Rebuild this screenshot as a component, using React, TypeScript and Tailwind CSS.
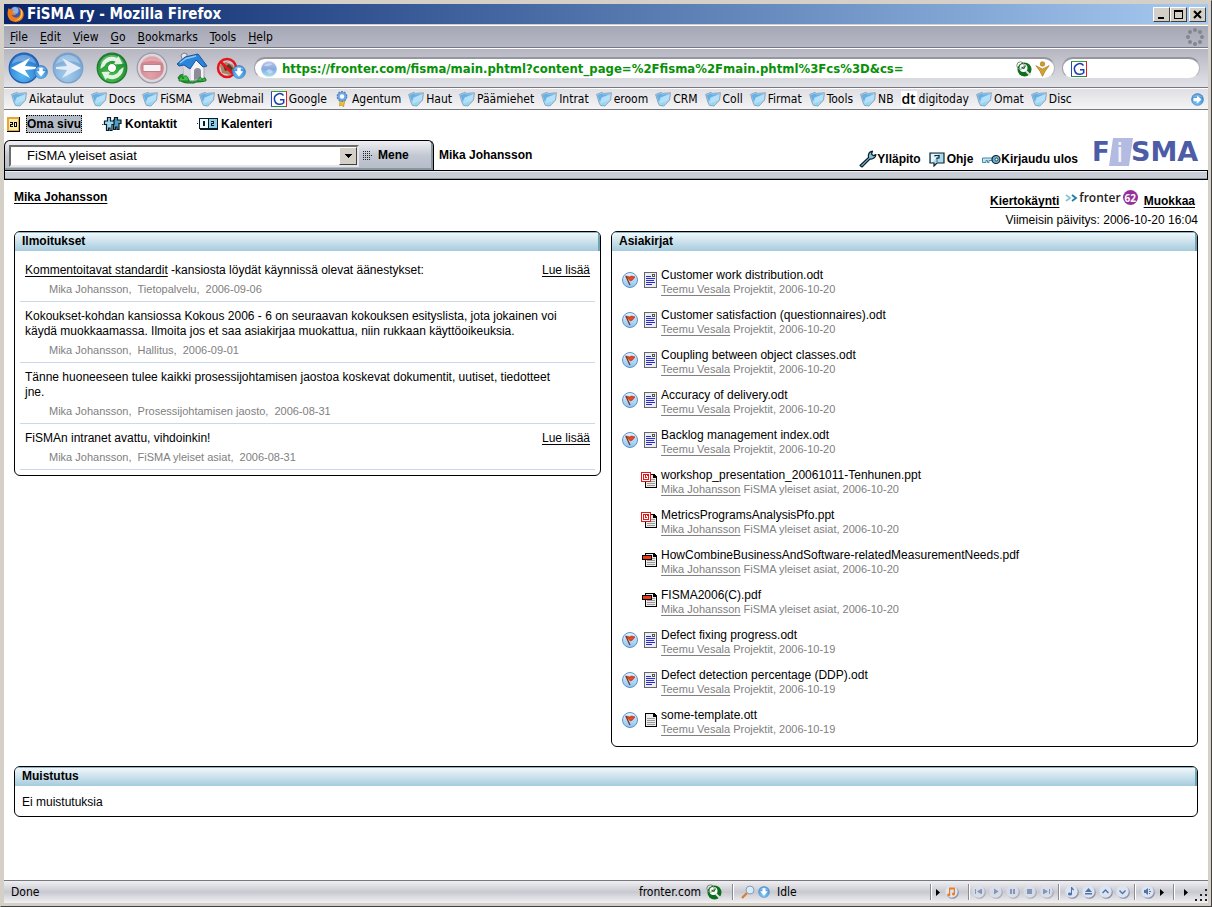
import React from "react";

const chromeFont = "font-['DejaVu_Sans_Condensed','DejaVu_Sans',sans-serif]";

/* ---------- Browser icons ---------- */

function FirefoxIcon() {
  return (
    <svg width="18" height="18" viewBox="0 0 18 18" aria-hidden="true">
      <circle cx="8.5" cy="8.5" r="7" fill="#3558b8" />
      <circle cx="8" cy="5.5" r="3.5" fill="#86b4ea" />
      <path d="M1.6 3.2 3.6 4.4C5 4 6.5 4.4 7 5.6L5.4 6.8C6 8.4 7.6 9 9.4 8.4 8.6 10.4 6 10.8 4.6 9.6 5.6 13 10.6 13.6 12.8 10.4 14.2 8 13.2 4.4 11 2c4 1.4 6.4 5.2 5.6 8.8C15.8 14.8 12.4 17 8.6 17 4 17 .6 13.4.6 9 .6 6.600 1 4.800 1.600 3.200Z" fill="#ee7a1a" />
      <path d="M13.4 3.6c2.4 2.6 2.8 6 1 9-1.6 2.4-4.4 3.4-7 2.8 3.6-.2 6-2.400 6.600-5.600.4-2.200 0-4.400-.6-6.200Z" fill="#ffd24a" />
    </svg>
  );
}

function Blob({ size, inner, outer, rim, id, children }: { size: number; inner: string; outer: string; rim: string; id: string; children: React.ReactNode }) {
  return (
    <svg width={size} height={size} viewBox="0 0 32 32" aria-hidden="true">
      <defs>
        <radialGradient id={id} cx="0.45" cy="0.75" r="0.8">
          <stop offset="0" stopColor={inner} />
          <stop offset="1" stopColor={outer} />
        </radialGradient>
      </defs>
      <circle cx="16" cy="16" r="14.8" fill={`url(#${id})`} stroke={rim} strokeWidth="1.2" />
      <path d="M4 12C6 5 11 3 16 3s10 2 12 9C22 8 10 8 4 12Z" fill="#fff" opacity="0.3" />
      {children}
    </svg>
  );
}

function DropBadge() {
  return (
    <Blob size={14} id="drop" inner="#6cc4f6" outer="#2a78cc" rim="#2d6db4">
      <path d="M12 6h8v8h6L16 26 6 14h6Z" fill="#fff" />
    </Blob>
  );
}

function HomeIcon() {
  return (
    <svg width="32" height="32" viewBox="0 0 32 32" aria-hidden="true">
      <path d="M2 26c2-5 7-4 10-2h12c3-1 5 1 6 4-4 3-9 1-12 3-6 0-12 1-16-5Z" fill="#2c9c38" stroke="#167022" />
      <path d="M7 12 20 6l8 9v11l-12 3-8-4Z" fill="#f4f4f8" stroke="#a4a4ae" />
      <path d="M7 12l8 5v12l-7-4Z" fill="#d8d9e2" />
      <path d="M18 28V19c0-4 7-4 7 0v7Z" fill="#8d8d99" />
      <path d="M5 3l3-2 3 1v7l-4 2Z" fill="#e8e8ee" stroke="#80808c" />
      <path d="M1 12 9 5l13-3 9 12-4 1-7-7-6 9-6-4-5 1Z" fill="#2d83d8" stroke="#17549c" strokeLinejoin="round" />
      <path d="M4 11 10 6.500l10-2.500" stroke="#8ccaf6" strokeWidth="1.500" fill="none" />
      <path d="M3 29c0-4 3-6 4-2 1-5 5-4 6 2ZM22 29c0-4 4-5 4-1 1-2 4-2 4 1Z" fill="#3fc24a" stroke="#167022" strokeWidth=".8" />
    </svg>
  );
}

function FlashBlockIcon() {
  return (
    <svg width="22" height="22" viewBox="0 0 22 22" aria-hidden="true">
      <path d="M4 8 10 5l7 3 2 6-5 4-8-2Z" fill="#a98364" />
      <path d="m7 8 3 1 3-2 4 4-2 4-3-2-3 1Z" fill="#5b3a26" />
      <circle cx="11" cy="11" r="9" fill="none" stroke="#e8141c" strokeWidth="2.500" />
      <path d="m5 5 12 12" stroke="#e8141c" strokeWidth="2.500" />
    </svg>
  );
}

function GlobeIcon() {
  return (
    <svg width="16" height="16" viewBox="0 0 16 16" aria-hidden="true">
      <defs>
        <linearGradient id="globe" x1="0" y1="0" x2="0" y2="1">
          <stop offset="0" stopColor="#c3c8ea" />
          <stop offset=".5" stopColor="#86aade" />
          <stop offset="1" stopColor="#a6e2f4" />
        </linearGradient>
      </defs>
      <circle cx="8" cy="8" r="7.800" fill="url(#globe)" />
      <path d="M3 5c2-2.500 5-3 8-2-1 2-5 2-8 2ZM5 10l3-2 2 1 2 2-3 2Z" fill="#dfe8f8" opacity=".6" />
    </svg>
  );
}

function GoogleIcon() {
  return (
    <svg width="16" height="16" viewBox="0 0 16 16" aria-hidden="true">
      <path fill="#fff" d="M0 0h16v16H0z" />
      <path d="M.5 16V.5" stroke="#2348c0" />
      <path d="M0 .5h16" stroke="#3aa03a" />
      <path d="M15.500 0v16" stroke="#d82424" />
      <path d="M0 15.500h15" stroke="#2a8c3c" />
      <path d="M12.500 4.500C11 2.600 8.500 2.300 6.500 3.200 4 4.300 3 7 3.600 9.300c.7 2.800 3 4.200 5.400 4 1.600-.1 2.800-.7 3.700-1.500V8.700H9" fill="none" stroke="#1b3fae" strokeWidth="1.500" />
    </svg>
  );
}

function FolderIcon() {
  return (
    <svg width="16" height="16" viewBox="0 0 16 16" aria-hidden="true">
      <path d="M.6 3.400 6 1.400l1.400 1 8-.6-.8 7.200L9 15l-4.600-.6L3 11.400Z" fill="#a5d6f4" stroke="#8496a8" strokeWidth=".8" strokeLinejoin="round" />
      <path d="M1.600 4 6 2.400 7.400 3.400l6.800-.4L5.600 6.400 3.800 10.800Z" fill="#66b0e6" />
      <path d="M6 6.800 14.400 3.400 13.600 8.800 9 11 4.600 12.600Z" fill="#b4e0f9" />
      <path d="m4.800 13 4.600-1.800-.8 3Z" fill="#7ce0f6" />
    </svg>
  );
}

function RibbonIcon() {
  return (
    <svg width="16" height="16" viewBox="0 0 16 16" aria-hidden="true">
      <path d="M6 9h5l-1.500 7-1.500-2-2.500 1Z" fill="#f0c22c" stroke="#b58612" strokeWidth=".6" />
      <circle cx="8" cy="5.500" r="4.800" fill="#6ea8e4" stroke="#5680bc" strokeDasharray="2 1" strokeWidth="1.200" />
      <circle cx="8" cy="5.500" r="2.200" fill="#fff" />
    </svg>
  );
}

function SecurityIcon() {
  return (
    <svg width="16" height="16" viewBox="0 0 16 16" aria-hidden="true">
      <circle cx="8.500" cy="8.500" r="7" fill="#0d6e1b" />
      <circle cx="7.500" cy="7" r="4" fill="#fff" />
      <path d="m9.500 4.500-2 3.500M7.500 7l-2-1" stroke="#0d6e1b" strokeWidth="1.200" />
      <path d="m10 10 4.500 4.500" stroke="#e2e2e2" strokeWidth="2" />
      <circle cx="4.500" cy="4.500" r="3.700" fill="none" stroke="#7a8a7c" />
    </svg>
  );
}

function PersonIcon() {
  return (
    <svg width="15" height="16" viewBox="0 0 15 16" aria-hidden="true">
      <circle cx="7.500" cy="3" r="2.300" fill="#d39a2c" stroke="#a3731a" strokeWidth=".6" />
      <path d="M.8 4.600 7.500 8l6.700-3.400-4 5.600-2.700 5.200-2.600-5.200Z" fill="#d8a032" stroke="#a3731a" strokeWidth=".6" />
    </svg>
  );
}

function Throbber() {
  const dots = [[9, 2], [14, 4], [16, 9], [14, 14], [9, 16], [4, 14], [2, 9], [4, 4]];
  return (
    <svg width="18" height="18" viewBox="0 0 18 18" aria-hidden="true">
      {dots.map(([x, y]) => (
        <circle key={`${x}-${y}`} cx={x} cy={y} r="2" fill="#85858c" />
      ))}
    </svg>
  );
}

function ArrowBadge() {
  return (
    <Blob size={13} id="more" inner="#7ccaf6" outer="#2a78cc" rim="#3a7cc0">
      <path d="M6 12h9V6l11 10-11 10v-6H6Z" fill="#fff" />
    </Blob>
  );
}

/* ---------- Page icons ---------- */

function HomePageIcon() {
  return (
    <svg width="13" height="15" viewBox="0 0 13 15" shapeRendering="crispEdges" aria-hidden="true">
      <path d="M0 0h13v15H0z" fill="#000" />
      <path d="M0 0h12v14H0z" fill="#e9a52c" />
      <path d="M2 2h9v11H2z" fill="#fde9b0" />
      <path d="M3 5h3v1H3zM5 6h1v1H5zM3 7h3v1H3zM3 8h1v1H3zM3 9h3v1H3zM7 5h3v1H7zM7 9h3v1H7zM7 5h1v4H7zM9 5h1v4H9z" fill="#000" />
    </svg>
  );
}

function ContactsIcon() {
  return (
    <svg width="20" height="16" viewBox="0 0 20 16" aria-hidden="true">
      <path d="M0 8h1.500v1H0z" fill="#555" />
      <path d="M12.500 1.500h3V4h3.500v3.500h-2v6h-2V11h-1.500v2.500h-2V4h1Z" fill="#4f9fc0" stroke="#0a1c28" strokeWidth="1.200" />
      <path d="M5.500 1.500h3V5H12v3.500h-2v6H8V12H6.500v2.500h-2v-6h-2V5h3Z" fill="#9ad8f0" stroke="#0a1c28" strokeWidth="1.200" />
    </svg>
  );
}

function CalendarIcon() {
  return (
    <svg width="21" height="14" viewBox="0 0 21 14" shapeRendering="crispEdges" aria-hidden="true">
      <path d="M0 6h1v1H0zM2 1h19v12H3V12H2Z" fill="#0a1c28" />
      <path d="M3 2h8v9H3z" fill="#eef9fd" />
      <path d="M12 2h8v9h-8z" fill="#8fcfe6" />
      <path d="M6 4h2v5H6zM14 4h3v1h-3zM16 5h1v1h-1zM14 6h3v1h-3zM14 7h1v1h-1zM14 8h3v1h-3z" fill="#0a1c28" />
    </svg>
  );
}

function WrenchIcon() {
  return (
    <svg width="18" height="18" viewBox="0 0 18 18" aria-hidden="true">
      <path d="M1 15.500 9.500 7.500C9 4.500 10.500 1.800 13.500 1.200L12.500 4l1.800 1.600L17 4.500C16.600 7.500 14 9.600 11 9L3 17Z" fill="#7fc3de" stroke="#10222c" strokeWidth="1.200" strokeLinejoin="round" />
    </svg>
  );
}

function HelpIcon() {
  return (
    <svg width="16" height="15" viewBox="0 0 16 15" aria-hidden="true">
      <path d="M1 1h14v10H8l-3 3v-3H1Z" fill="#a9dbee" stroke="#10222c" strokeWidth="1.200" />
      <path d="M2 2h8L4 10H2Z" fill="#e4f6fc" />
      <path d="M6 4.500V3.500h4V6H8v1.500M8 8.500v1" fill="none" stroke="#10222c" strokeWidth="1.200" />
    </svg>
  );
}

function KeyIcon() {
  return (
    <svg width="20" height="12" viewBox="0 0 20 12" aria-hidden="true">
      <path d="M1.500 5h10v2.500H8v2H6.500v-2H5v2H1.500Z" fill="#bfe6f4" stroke="#4a88a4" />
      <circle cx="15" cy="6.500" r="4" fill="#68b4d4" stroke="#10222c" strokeWidth="1.200" />
      <circle cx="15.500" cy="6.500" r="1.400" fill="#fff" stroke="#10222c" strokeWidth=".8" />
    </svg>
  );
}

function FlagIcon() {
  return (
    <svg width="16" height="16" viewBox="0 0 16 16" aria-hidden="true">
      <defs>
        <linearGradient id="flagBg" x1="0" y1="0" x2="0" y2="1">
          <stop offset="0" stopColor="#e8f4fc" />
          <stop offset="1" stopColor="#8cc4ee" />
        </linearGradient>
      </defs>
      <circle cx="8" cy="8" r="7.500" fill="url(#flagBg)" stroke="#5b93cc" />
      <path d="m3.500 4 4.500 1 1.500-1 3.500 1-2 2.500-2.500 1.500Z" fill="#e8481e" stroke="#a8331a" strokeWidth=".7" />
      <path d="m4 4.500 4 8.500" stroke="#7a2a18" strokeWidth="1.200" />
    </svg>
  );
}

function OdtIcon() {
  return (
    <svg width="13" height="16" viewBox="0 0 13 16" shapeRendering="crispEdges" aria-hidden="true">
      <path d="M0 0h13v16H0z" fill="#66676b" />
      <path d="M1 1h11v14H1z" fill="#eceded" />
      <path d="M8 2h3v3H8z" fill="#55565a" />
      <path d="M9 3h1v1H9z" fill="#fff" />
      <path d="M2 4h5v1H2zM2 6h9v1H2zM2 8h8v1H2zM2 10h9v1H2zM2 12h6v1H2z" fill="#2a2ad8" />
    </svg>
  );
}

function SheetPath() {
  return (
    <>
      <path d="M0 0h9l3 3v11H0Z" fill="#000" />
      <path d="M1 1h7v3h3v9H1Z" fill="#ececec" />
      <path d="M2 5h8v1H2zM2 7h8v1H2zM2 9h8v1H2zM2 11h8v1H2z" fill="#9a9a9a" />
    </>
  );
}

function OttIcon() {
  return (
    <svg width="12" height="14" viewBox="0 0 12 14" shapeRendering="crispEdges" aria-hidden="true">
      <SheetPath />
    </svg>
  );
}

function PptIcon() {
  return (
    <svg width="16" height="16" viewBox="0 0 16 16" shapeRendering="crispEdges" aria-hidden="true">
      <g transform="translate(4 2)"><SheetPath /></g>
      <path d="M0 0h10v10H0z" fill="#e01818" />
      <path d="M1 1h8v8H1z" fill="#fff" />
      <path d="M2 2h6v6H2z" fill="#e01818" />
      <path d="M3 3h1v4H3zM4 6h3v1H4zM6 4h1v2H6zM5 3h1v2H5z" fill="#fff" />
    </svg>
  );
}

function PdfIcon() {
  return (
    <svg width="15" height="14" viewBox="0 0 15 14" shapeRendering="crispEdges" aria-hidden="true">
      <g transform="translate(3 0)"><SheetPath /></g>
      <path d="M0 2h10v5H0z" fill="#000" />
      <path d="M1 3h8v3H1z" fill="#f03a10" />
    </svg>
  );
}

function FismaLogo() {
  return (
    <svg width="112" height="38" viewBox="0 0 112 38" role="img" aria-label="FiSMA" fontFamily="'DejaVu Sans', sans-serif" fontWeight="700">
      <path d="M21 6h20l-4 28H17Z" fill="#b3bbe0" />
      <text x="0" y="29" fontSize="26" fill="#4d5ca6">F</text>
      <text x="24" y="30" fontSize="27" fill="#f4f5fc" fontWeight="400">i</text>
      <text x="39" y="29" fontSize="27" fill="#4d5ca6">SMA</text>
    </svg>
  );
}

function FronterLogo() {
  return (
    <span className="flex items-center font-['Open_Sans',sans-serif] text-xs leading-[15px] font-semibold text-[#222]">
      <svg width="13" height="10" viewBox="0 0 13 10" aria-hidden="true" className="mr-px">
        <path d="m1 2 4 3-4 3" fill="none" stroke="#8cc4d8" strokeWidth="1.800" />
        <path d="m7 2 4 3-4 3" fill="none" stroke="#1b7fa4" strokeWidth="1.800" />
      </svg>
      fronter
      <span className="ml-0.5 flex size-[15px] items-center justify-center rounded-full bg-[#98309c] text-[10px] leading-none font-bold text-white">62</span>
    </span>
  );
}

/* ---------- Browser chrome ---------- */

function WindowButton({ label, children }: { label: string; children: React.ReactNode }) {
  return (
    <button aria-label={label} className="flex h-[15px] w-[17px] items-center justify-center border border-t-white border-r-[#404040] border-b-[#404040] border-l-white bg-[#d4d0c8]">
      <svg width="11" height="11" viewBox="0 0 11 11" shapeRendering="crispEdges" aria-hidden="true">{children}</svg>
    </button>
  );
}

function TitleBar() {
  return (
    <header className="flex h-5 shrink-0 items-center bg-gradient-to-r from-[#0a246a] to-[#a6caf0] pr-0.5 pl-[3px]">
      <FirefoxIcon />
      <h1 className="ml-0.5 flex-1 text-[15px] leading-5 font-bold text-white">FiSMA ry - Mozilla Firefox</h1>
      <WindowButton label="Minimize"><path d="M2 8h6v2H2z" /></WindowButton>
      <WindowButton label="Maximize"><path d="M1 1h9v9H1zM2 3v6h7V3z" fillRule="evenodd" /></WindowButton>
      <span className="ml-0.5 flex">
        <WindowButton label="Close"><path d="m2 2 7 7M9 2 2 9" stroke="#000" strokeWidth="2" shapeRendering="auto" /></WindowButton>
      </span>
    </header>
  );
}

const menus = ["File", "Edit", "View", "Go", "Bookmarks", "Tools", "Help"];

function MenuBar() {
  return (
    <div className="flex h-[23px] shrink-0 items-center justify-between border-t border-b border-t-white border-b-[#77777f] bg-gradient-to-b from-[#a6a7b4] to-[#b7b8c6] pr-1 pl-1.5">
      <nav className="flex gap-3 text-xs">
        {menus.map((m) => (
          <button key={m}><span className="underline underline-offset-2">{m[0]}</span>{m.slice(1)}</button>
        ))}
      </nav>
      <Throbber />
    </div>
  );
}

const pill = "flex h-[22px] items-center rounded-full border border-t-2 border-t-[#96969e] border-r-[#b4b4bc] border-b-[#dcdce0] border-l-[#a0a0a8] bg-white";

function Toolbar() {
  return (
    <div className="flex h-10 shrink-0 items-center border-t border-b border-t-white border-b-[#77777f] bg-gradient-to-b from-[#b6b6c2] to-[#e2e2e8] pr-2 pl-1">
      <button aria-label="Back" className="flex items-center">
        <Blob size={32} id="back" inner="#58b8f4" outer="#1c68c4" rim="#1f5ca8">
          <path d="M3 16 22 6C20 9 18 12 17 14l11 1v2l-11 1c1 2 3 5 5 8Z" fill="#fff" />
        </Blob>
        <span className="-ml-1.5 pt-2"><DropBadge /></span>
      </button>
      <button aria-label="Forward" className="ml-1">
        <Blob size={32} id="forward" inner="#a4cdec" outer="#6a9cd0" rim="#7c9fc8">
          <path d="M29 16 10 6c2 3 4 6 5 8L4 15v2l11 1c-1 2-3 5-5 8Z" fill="#e4edf7" />
        </Blob>
      </button>
      <button aria-label="Reload" className="ml-3">
        <Blob size={32} id="reload" inner="#4cc050" outer="#14802a" rim="#1a7a2c">
          <path d="M4.500 17A11.500 11.500 0 0 1 21 6l1.500-2 4 8-9 .5 2-3A8.500 8.500 0 0 0 8.500 14ZM27.500 15A11.500 11.500 0 0 1 11 26l-1.500 2-4-8 9-.5-2 3a8.500 8.500 0 0 0 11-4.500Z" fill="#f2fbf2" opacity=".9" />
          <circle cx="16" cy="16" r="4.500" fill="#fff" stroke="#2a9a38" />
        </Blob>
      </button>
      <button aria-label="Stop" className="ml-2">
        <Blob size={32} id="stop" inner="#dfa2aa" outer="#d0707c" rim="#9a9aa2">
          <circle cx="16" cy="16" r="13" fill="none" stroke="#d8d8de" strokeWidth="2.500" />
          <path d="M7 12.500h18v7H7z" fill="#f5f3f6" stroke="#c0808a" />
        </Blob>
      </button>
      <button aria-label="Home" className="ml-2"><HomeIcon /></button>
      <button aria-label="Flash blocking" className="ml-2 flex items-center">
        <FlashBlockIcon />
        <span className="-ml-1.5 pt-2"><DropBadge /></span>
      </button>
      <div className={`${pill} ml-2 flex-1 gap-[5px] pr-1 pl-1.5`}>
        <GlobeIcon />
        <input
          aria-label="Address"
          className="min-w-0 flex-1 text-[13px] leading-4 font-bold text-[#089008] outline-none"
          defaultValue="https://fronter.com/fisma/main.phtml?content_page=%2Ffisma%2Fmain.phtml%3Fcs%3D&cs="
        />
        <span className="flex gap-[3px]">
          <SecurityIcon />
          <PersonIcon />
        </span>
      </div>
      <div className={`${pill} ml-[7px] w-[138px] pl-2`}>
        <GoogleIcon />
        <input aria-label="Search" className="min-w-0 flex-1 px-1 text-xs outline-none" />
      </div>
    </div>
  );
}

const bookmarks = [
  "Aikataulut", "Docs", "FiSMA", "Webmail", "Google", "Agentum", "Haut", "Päämiehet", "Intrat", "eroom",
  "CRM", "Coll", "Firmat", "Tools", "NB", "digitoday", "Omat", "Disc",
];

function BookmarkIcon({ name }: { name: string }) {
  if (name === "Google") return <GoogleIcon />;
  if (name === "Agentum") return <RibbonIcon />;
  if (name === "digitoday") {
    return <span className="w-4 bg-white text-center font-['Open_Sans',sans-serif] text-[14px] leading-4 font-semibold">dt</span>;
  }
  return <FolderIcon />;
}

function BookmarksBar() {
  return (
    <nav className="flex h-[22px] shrink-0 items-center border-t border-b border-t-white border-b-[#77777f] bg-gradient-to-b from-[#dfdfe4] to-[#f5f5f6] pr-1 pl-[7px]">
      <ul className="flex min-w-0 flex-1 gap-[7px] text-xs">
        {bookmarks.map((b) => (
          <li key={b}>
            <a href="#" className="flex items-center gap-0.5"><BookmarkIcon name={b} />{b}</a>
          </li>
        ))}
      </ul>
      <button aria-label="More bookmarks"><ArrowBadge /></button>
    </nav>
  );
}

/* ---------- Page ---------- */

function MainNav() {
  return (
    <nav className="flex h-[30px] items-center pb-0.5 pl-[3px] font-bold">
      <a href="#" className="flex items-center gap-1.5">
        <HomePageIcon />
        <span className="border border-dotted border-black bg-[#b4bcc8] leading-4">Oma sivu</span>
      </a>
      <a href="#" className="ml-5 flex items-center gap-[3px]"><ContactsIcon />Kontaktit</a>
      <a href="#" className="ml-5 flex items-center gap-[3px]"><CalendarIcon />Kalenteri</a>
    </nav>
  );
}

function RoomBar() {
  return (
    <div>
      <div className="flex h-[30px] items-end">
        <form className="flex h-[30px] w-[430px] items-center rounded-t-md border border-b-0 border-black bg-gradient-to-b from-[#f0f0f4] via-[#c2c8d2] to-[#b4bcc8] pl-1 shadow-[inset_-2px_-2px_0_#8a95a2]" onSubmit={(e) => e.preventDefault()}>
          <div className="relative h-[22px] w-[350px] border-2 border-t-[#6c6c6c] border-r-[#e6e6e6] border-b-[#e6e6e6] border-l-[#6c6c6c] bg-white">
            <select aria-label="Huone" className="h-full w-full appearance-none bg-white pl-4 text-[13px] leading-4 outline-none">
              <option>FiSMA yleiset asiat</option>
            </select>
            <span className="pointer-events-none absolute top-0 right-0 flex h-[18px] w-[18px] items-center justify-center border border-t-white border-r-[#404040] border-b-[#404040] border-l-white bg-[#d4d0c8]">
              <svg width="7" height="4" viewBox="0 0 7 4" shapeRendering="crispEdges" aria-hidden="true"><path d="M0 0h7L3.500 4Z" /></svg>
            </span>
          </div>
          <button className="ml-1 flex items-center gap-1 font-bold">
            <svg width="11" height="10" viewBox="0 0 11 10" shapeRendering="crispEdges" aria-hidden="true">
              {[0, 2, 4, 6, 8].flatMap((y) =>
                [0, 2, 4, 6, 8].filter((x) => x < 8 || y === 4).map((x) => <rect key={`${x}-${y}`} x={x} y={y} width="1" height="1" fill="#222" />),
              )}
            </svg>
            Mene
          </button>
        </form>
        <span className="mb-[7px] ml-[5px] flex-1 font-bold">Mika Johansson</span>
        <nav className="mr-3.5 mb-0.5 flex gap-2 font-bold">
          <a href="#" className="flex items-center"><WrenchIcon />Ylläpito</a>
          <a href="#" className="flex items-center gap-0.5"><HelpIcon />Ohje</a>
          <a href="#" className="flex items-center"><KeyIcon />Kirjaudu ulos</a>
        </nav>
        <span className="mr-1"><FismaLogo /></span>
      </div>
      <div className="h-2.5 border border-black bg-[#c9cdd5] shadow-[inset_0_-1px_0_#8f9aa6,inset_0_1px_0_#eef0f3]" />
    </div>
  );
}

function Panel({ title, children }: { title: string; children: React.ReactNode }) {
  return (
    <section className="overflow-hidden rounded-md border border-black bg-white">
      <h2 className="h-[19px] border-t border-r-2 border-t-[#8fb6c6] border-r-[#6fa3b8] bg-gradient-to-b from-[#eff7fa] to-[#a5cbdd] pl-[7px] leading-[17px] font-bold">{title}</h2>
      {children}
    </section>
  );
}

type News = { link?: string; text: string; meta: string[]; more?: boolean };

const news: News[] = [
  { link: "Kommentoitavat standardit", text: " -kansiosta löydät käynnissä olevat äänestykset:", meta: ["Mika Johansson,", "Tietopalvelu,", "2006-09-06"], more: true },
  { text: "Kokoukset-kohdan kansiossa Kokous 2006 - 6 on seuraavan kokouksen esityslista, jota jokainen voi käydä muokkaamassa. Ilmoita jos et saa asiakirjaa muokattua, niin rukkaan käyttöoikeuksia.", meta: ["Mika Johansson,", "Hallitus,", "2006-09-01"] },
  { text: "Tänne huoneeseen tulee kaikki prosessijohtamisen jaostoa koskevat dokumentit, uutiset, tiedotteet jne.", meta: ["Mika Johansson,", "Prosessijohtamisen jaosto,", "2006-08-31"] },
  { text: "FiSMAn intranet avattu, vihdoinkin!", meta: ["Mika Johansson,", "FiSMA yleiset asiat,", "2006-08-31"], more: true },
];

function NewsPanel() {
  return (
    <Panel title="Ilmoitukset">
      <ul className="px-[5px] py-[5px]">
        {news.map((n) => (
          <li key={n.text} className="border-b border-[#c9d8ea] px-[5px] pt-[7px] pb-1">
            <div className="flex justify-between">
              <p className="flex-1 pr-5">
                {n.link && <a href="#" className="underline underline-offset-2">{n.link}</a>}
                {n.text}
              </p>
              {n.more && <a href="#" className="underline underline-offset-2">Lue lisää</a>}
            </div>
            <p className="mt-1 flex gap-1.5 pl-6 text-[11px] text-[#808080]">
              {n.meta.map((m) => <span key={m}>{m}</span>)}
            </p>
          </li>
        ))}
      </ul>
    </Panel>
  );
}

type Doc = { name: string; kind: "odt" | "ppt" | "pdf" | "ott"; date: string };

const docs: Doc[] = [
  { name: "Customer work distribution.odt", kind: "odt", date: "2006-10-20" },
  { name: "Customer satisfaction (questionnaires).odt", kind: "odt", date: "2006-10-20" },
  { name: "Coupling between object classes.odt", kind: "odt", date: "2006-10-20" },
  { name: "Accuracy of delivery.odt", kind: "odt", date: "2006-10-20" },
  { name: "Backlog management index.odt", kind: "odt", date: "2006-10-20" },
  { name: "workshop_presentation_20061011-Tenhunen.ppt", kind: "ppt", date: "2006-10-20" },
  { name: "MetricsProgramsAnalysisPfo.ppt", kind: "ppt", date: "2006-10-20" },
  { name: "HowCombineBusinessAndSoftware-relatedMeasurementNeeds.pdf", kind: "pdf", date: "2006-10-20" },
  { name: "FISMA2006(C).pdf", kind: "pdf", date: "2006-10-20" },
  { name: "Defect fixing progress.odt", kind: "odt", date: "2006-10-19" },
  { name: "Defect detection percentage (DDP).odt", kind: "odt", date: "2006-10-19" },
  { name: "some-template.ott", kind: "ott", date: "2006-10-19" },
];

const docIcons = { odt: <OdtIcon />, ppt: <PptIcon />, pdf: <PdfIcon />, ott: <OttIcon /> };

function DocsPanel() {
  return (
    <Panel title="Asiakirjat">
      <ul className="grid gap-3 pt-[17px] pb-2.5 pl-2.5">
        {docs.map((d) => {
          const flagged = d.kind === "odt" || d.kind === "ott";
          return (
            <li key={d.name} className="flex items-start">
              <span className="flex h-6 w-[35px] shrink-0 items-center justify-between">
                <span>{flagged && <FlagIcon />}</span>
                {docIcons[d.kind]}
              </span>
              <div className="ml-1 leading-[14px]">
                <a href="#" className="block">{d.name}</a>
                <p className="text-[11px] text-[#808080]">
                  <a href="#" className="underline underline-offset-2">{flagged ? "Teemu Vesala" : "Mika Johansson"}</a>{" "}
                  {flagged ? "Projektit" : "FiSMA yleiset asiat"}, {d.date}
                </p>
              </div>
            </li>
          );
        })}
      </ul>
    </Panel>
  );
}

function Page() {
  return (
    <main className="flex-1 bg-white font-['Liberation_Sans',Arial,sans-serif] text-xs leading-[15px] text-black">
      <MainNav />
      <RoomBar />
      <div className="px-2.5">
        <div className="flex h-[51px] justify-between pt-2.5">
          <a href="#" className="font-bold underline underline-offset-2">Mika Johansson</a>
          <div>
            <div className="flex items-end justify-end gap-1.5 pr-[3px] font-bold">
              <a href="#" className="underline underline-offset-2">Kiertokäynti</a>
              <span className="mb-1"><FronterLogo /></span>
              <a href="#" className="underline underline-offset-2">Muokkaa</a>
            </div>
            <p className="mt-1 text-right">Viimeisin päivitys: 2006-10-20 16:04</p>
          </div>
        </div>
        <div className="grid grid-cols-2 items-start gap-2.5">
          <NewsPanel />
          <DocsPanel />
        </div>
        <div className="mt-[19px]">
          <Panel title="Muistutus">
            <p className="px-[7px] pt-[9px] pb-1.5">Ei muistutuksia</p>
          </Panel>
        </div>
      </div>
    </main>
  );
}

/* ---------- Status bar ---------- */

function Separator() {
  return <span className="h-4 w-0.5 border-l border-[#8a8a90] bg-white" />;
}

function Triangle() {
  return <svg width="4" height="7" viewBox="0 0 4 7" aria-hidden="true"><path d="M0 0v7l4-3.500Z" /></svg>;
}

function Media({ label, faded, path, color }: { label: string; faded?: boolean; path: string; color?: string }) {
  return (
    <button aria-label={label} className={faded ? "opacity-60" : ""}>
      <svg width="14" height="14" viewBox="0 0 14 14" aria-hidden="true">
        <circle cx="7.500" cy="7.500" r="6.300" fill="#8e92a6" />
        <circle cx="6.500" cy="6.500" r="6.200" fill="#dbe4f1" />
        <path d={path} fill={color ?? "#5472a8"} />
      </svg>
    </button>
  );
}

function IdleBadge() {
  return (
    <Blob size={12} id="idle" inner="#8fd0fa" outer="#2f80d4" rim="#5a92c8">
      <path d="M12 6h8v8h6L16 26 6 14h6Z" fill="#fff" />
    </Blob>
  );
}

function StatusBar() {
  return (
    <footer className="flex h-[23px] shrink-0 items-center border-t border-[#77777f] bg-gradient-to-b from-[#f0f0f3] via-[#c8c8d0] to-[#f2f2f4] pl-[7px] text-xs">
      <span className="flex-1">Done</span>
      <span>fronter.com</span>
      <span className="ml-[5px]"><SecurityIcon /></span>
      <span className="ml-2.5 flex w-[198px] items-center gap-[3px]">
        <Separator />
        <svg width="14" height="14" viewBox="0 0 14 14" aria-hidden="true" className="ml-1">
          <path d="m1 13 5-5" stroke="#d87c28" strokeWidth="2.200" />
          <circle cx="9" cy="5" r="4" fill="#d5ecfa" stroke="#8e98b4" />
        </svg>
        <IdleBadge />
        <span className="ml-1">Idle</span>
      </span>
      <span className="flex items-center gap-1">
        <Separator /><Triangle />
        <span className="mr-[5px] ml-px flex"><Media label="Music" color="#ee7c1c" path="M4 2.500h6v6.500a1.500 1.500 0 1 1-1.200-1.500V4.500H5.200V10a1.500 1.500 0 1 1-1.200-1.500Z" /></span>
        <Separator />
      </span>
      <span className="ml-0.5 flex gap-[3px]">
        <Media faded label="Previous" path="M3 4h1v5H3zM9 4v5L5 6.500ZM9 4h1v5H9z" />
        <Media faded label="Play" path="M5 3.500v6l4.500-3Z" />
        <Media faded label="Pause" path="M4 4h2v5H4zM7 4h2v5H7z" />
        <Media faded label="Stop" path="M4 4h5v5H4z" />
        <Media faded label="Next" path="M3 4h1v5H3zM4 4v5l4-2.500ZM9 4h1v5H9z" />
      </span>
      <span className="mr-[5px] ml-1 flex"><Separator /></span>
      <span className="flex gap-[3px]">
        <Media label="Track" path="M6 2h1l2 2.500v1L7 4.500V9a2 1.500 0 1 1-1-1.200Z" />
        <Media label="Eject" path="M6.500 3 10 7H3ZM3 8h7v1.500H3z" />
        <Media label="Up" path="m6.500 4 3.500 3.500-1 1-2.500-2.500L4 8.500l-1-1Z" />
        <Media label="Down" path="m6.500 9.500L10 6 9 5 6.500 7.500 4 5 3 6Z" />
      </span>
      <span className="ml-1 flex items-center gap-[5px]">
        <Separator />
        <Media label="Volume" path="M3 5h1.500L7 3v7L4.500 8H3ZM8 4h1v1H8zM8 6h2v1H8zM8 8h1v1H8z" />
        <Triangle />
        <span className="ml-1 flex"><Separator /></span>
        <span className="ml-1 flex"><Triangle /></span>
      </span>
      <svg width="14" height="13" viewBox="0 0 14 13" className="mt-1.5 ml-1.5" shapeRendering="crispEdges" aria-hidden="true">
        <path d="M11 0h2v2h-2zM6 5h2v2H6zM11 5h2v2h-2zM1 10h2v2H1zM6 10h2v2H6zM11 10h2v2h-2z" fill="#222" />
      </svg>
    </footer>
  );
}

export default function App() {
  return (
    <div className={`flex min-h-screen flex-col border border-t-[#d4d0c8] border-r-[#404040] border-b-[#404040] border-l-[#d4d0c8] bg-[#d4d0c8] p-[3px] text-black ${chromeFont}`}>
      <TitleBar />
      <div className="mt-px flex flex-1 flex-col">
        <MenuBar />
        <Toolbar />
        <BookmarksBar />
        <Page />
        <StatusBar />
      </div>
    </div>
  );
}
